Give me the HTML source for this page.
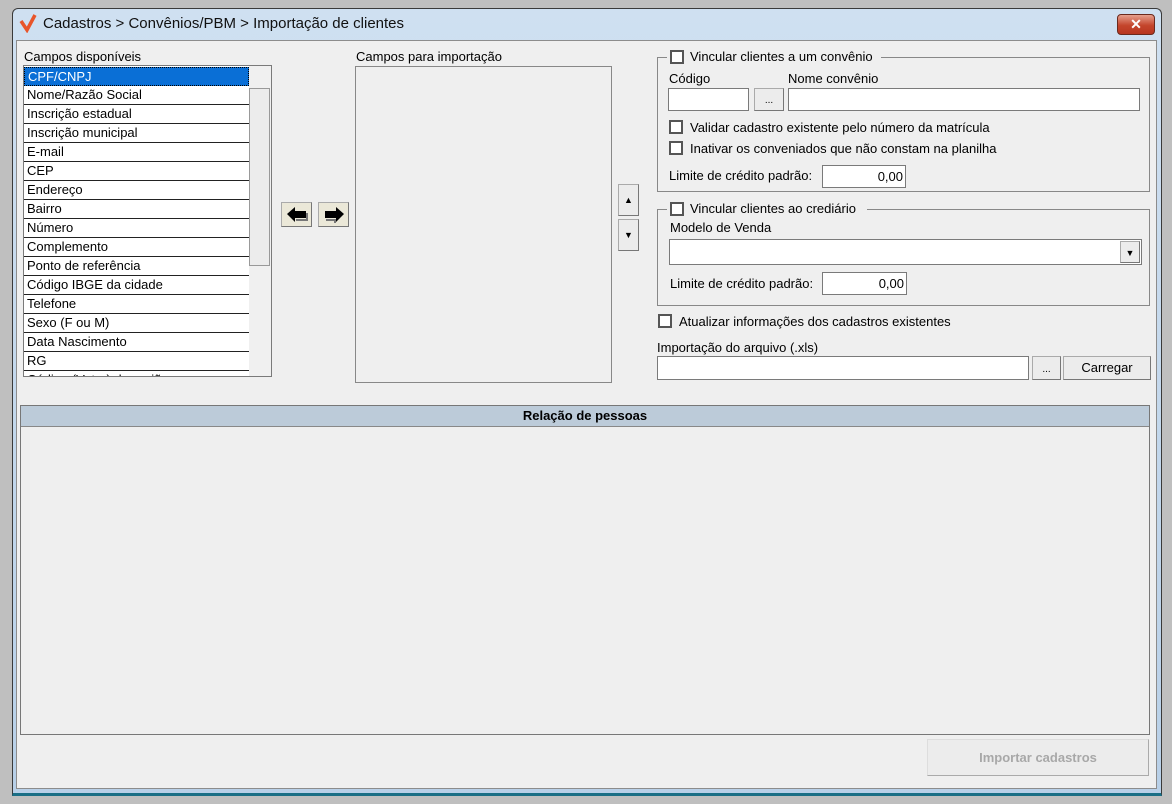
<!DOCTYPE html>
<html><head><meta charset="utf-8"><style>
*{margin:0;padding:0;box-sizing:border-box}
body{width:1172px;height:804px;background:#bfbfbf;font-family:"Liberation Sans",sans-serif;font-size:13px;color:#000;position:relative;overflow:hidden}
.a{position:absolute}
.win{left:12px;top:8px;width:1150px;height:788px;background:linear-gradient(#cfe0f1,#b8d0e8);border:1px solid #3a3a3a;border-radius:6px 6px 0 0;border-bottom:3px solid #1a6f86}
.client{left:16px;top:40px;width:1141px;height:749px;background:#efefef;border:1px solid #8c8c8c}
.in{background:#fff;border:1px solid #7a7a7a}
.txt{white-space:nowrap}
.cb{width:14px;height:14px;border:2px solid #555;background:#fff}
.btn{background:#ececec;border:1px solid #aaa;border-right-color:#777;border-bottom-color:#777;text-align:center}
.li{position:absolute;left:0;width:225px;height:19px;border-bottom:1px solid #222;padding-left:3px;line-height:18px;background:#fff}
.grp{border:1px solid #888}
</style></head><body>
<div class="a win"></div>
<svg class="a" style="left:19px;top:13px" width="18" height="20"><path d="M2 8 L8 17 L16 2" stroke="#e8552a" stroke-width="3.5" fill="none"/></svg>
<div class="a txt" style="left:43px;top:15px;font-size:15px;color:#111">Cadastros &gt; Convênios/PBM &gt; Importação de clientes</div>
<div class="a" style="left:1117px;top:14px;width:38px;height:21px;border-radius:4px;background:linear-gradient(#e6a08e,#c4452c 55%,#b83620);border:1px solid #6b2a1e;color:#fff;font-weight:bold;text-align:center;font-size:14px;line-height:18px">✕</div>
<div class="a client"></div>

<div class="a txt" style="left:24px;top:49px">Campos disponíveis</div>
<div class="a in" style="left:23px;top:65px;width:249px;height:312px;overflow:hidden">
 <div class="a" style="left:0;top:0;width:225px;height:310px">
  <div class="li" style="top:1px;background:#0a6fd6;color:#fff;border:1px dotted #000">CPF/CNPJ</div>
  <div class="li" style="top:20px">Nome/Razão Social</div>
  <div class="li" style="top:39px">Inscrição estadual</div>
  <div class="li" style="top:58px">Inscrição municipal</div>
  <div class="li" style="top:77px">E-mail</div>
  <div class="li" style="top:96px">CEP</div>
  <div class="li" style="top:115px">Endereço</div>
  <div class="li" style="top:134px">Bairro</div>
  <div class="li" style="top:153px">Número</div>
  <div class="li" style="top:172px">Complemento</div>
  <div class="li" style="top:191px">Ponto de referência</div>
  <div class="li" style="top:210px">Código IBGE da cidade</div>
  <div class="li" style="top:229px">Telefone</div>
  <div class="li" style="top:248px">Sexo (F ou M)</div>
  <div class="li" style="top:267px">Data Nascimento</div>
  <div class="li" style="top:286px">RG</div>
  <div class="li" style="top:305px">Código (Vetor) da região</div>
 </div>
 <div class="a" style="left:225px;top:0;width:22px;height:310px;background:#f0f0f0"></div>
 <div class="a" style="left:225px;top:22px;width:21px;height:178px;background:#ececec;border:1px solid #999"></div>
</div>

<div class="a btn" style="left:281px;top:202px;width:31px;height:25px;background:#ebe8d8"><svg width="29" height="23"><path d="M5 11 L13 4 L13 8 L24 8 L24 15 L13 15 L13 19Z" fill="#000"/><path d="M14 17 L25 17 L25 10" stroke="#777" stroke-width="2" fill="none"/></svg></div>
<div class="a btn" style="left:318px;top:202px;width:31px;height:25px;background:#ebe8d8"><svg width="29" height="23"><path d="M25 11 L17 4 L17 8 L6 8 L6 15 L17 15 L17 19Z" fill="#000"/><path d="M7 17 L16 17 L16 20" stroke="#777" stroke-width="2" fill="none"/></svg></div>

<div class="a txt" style="left:356px;top:49px">Campos para importação</div>
<div class="a" style="left:355px;top:66px;width:257px;height:317px;border:1px solid #888;background:#efefef"></div>

<div class="a btn" style="left:618px;top:184px;width:21px;height:32px;font-size:9px;line-height:30px">▲</div>
<div class="a btn" style="left:618px;top:219px;width:21px;height:32px;font-size:9px;line-height:30px">▼</div>

<div class="a grp" style="left:657px;top:57px;width:493px;height:135px"></div>
<div class="a" style="left:667px;top:49px;width:214px;height:16px;background:#efefef"></div>
<div class="a cb" style="left:670px;top:50px"></div>
<div class="a txt" style="left:690px;top:49px">Vincular clientes a um convênio</div>
<div class="a txt" style="left:669px;top:71px">Código</div>
<div class="a txt" style="left:788px;top:71px">Nome convênio</div>
<div class="a in" style="left:668px;top:88px;width:81px;height:23px"></div>
<div class="a btn" style="left:754px;top:88px;width:30px;height:23px;font-size:10px;line-height:24px">...</div>
<div class="a in" style="left:788px;top:88px;width:352px;height:23px"></div>
<div class="a cb" style="left:669px;top:120px"></div>
<div class="a txt" style="left:690px;top:120px">Validar cadastro existente pelo número da matrícula</div>
<div class="a cb" style="left:669px;top:141px"></div>
<div class="a txt" style="left:690px;top:141px">Inativar os conveniados que não constam na planilha</div>
<div class="a txt" style="left:669px;top:168px">Limite de crédito padrão:</div>
<div class="a in" style="left:822px;top:165px;width:84px;height:23px;text-align:right;padding:3px 2px 0 0">0,00</div>

<div class="a grp" style="left:657px;top:209px;width:493px;height:97px"></div>
<div class="a" style="left:667px;top:201px;width:200px;height:16px;background:#efefef"></div>
<div class="a cb" style="left:670px;top:202px"></div>
<div class="a txt" style="left:690px;top:201px">Vincular clientes ao crediário</div>
<div class="a txt" style="left:670px;top:220px">Modelo de Venda</div>
<div class="a in" style="left:669px;top:239px;width:473px;height:26px"></div>
<div class="a btn" style="left:1120px;top:241px;width:20px;height:22px;font-size:9px;line-height:22px">▼</div>
<div class="a txt" style="left:670px;top:276px">Limite de crédito padrão:</div>
<div class="a in" style="left:822px;top:272px;width:85px;height:23px;text-align:right;padding:3px 2px 0 0">0,00</div>

<div class="a cb" style="left:658px;top:314px"></div>
<div class="a txt" style="left:679px;top:314px">Atualizar informações dos cadastros existentes</div>
<div class="a txt" style="left:657px;top:340px">Importação do arquivo (.xls)</div>
<div class="a in" style="left:657px;top:356px;width:372px;height:24px"></div>
<div class="a btn" style="left:1032px;top:356px;width:29px;height:24px;font-size:10px;line-height:26px">...</div>
<div class="a btn" style="left:1063px;top:356px;width:88px;height:24px;line-height:22px">Carregar</div>

<div class="a" style="left:20px;top:405px;width:1130px;height:330px;border:1px solid #777;background:#efefef"></div>
<div class="a" style="left:21px;top:406px;width:1128px;height:21px;background:#bccbd9;border-bottom:1px solid #888;text-align:center;font-weight:bold;line-height:20px">Relação de pessoas</div>

<div class="a btn" style="left:927px;top:739px;width:222px;height:37px;line-height:36px;font-weight:bold;color:#a8a8a8;border-color:#ddd #aaa #aaa #ddd">Importar cadastros</div>
</body></html>
